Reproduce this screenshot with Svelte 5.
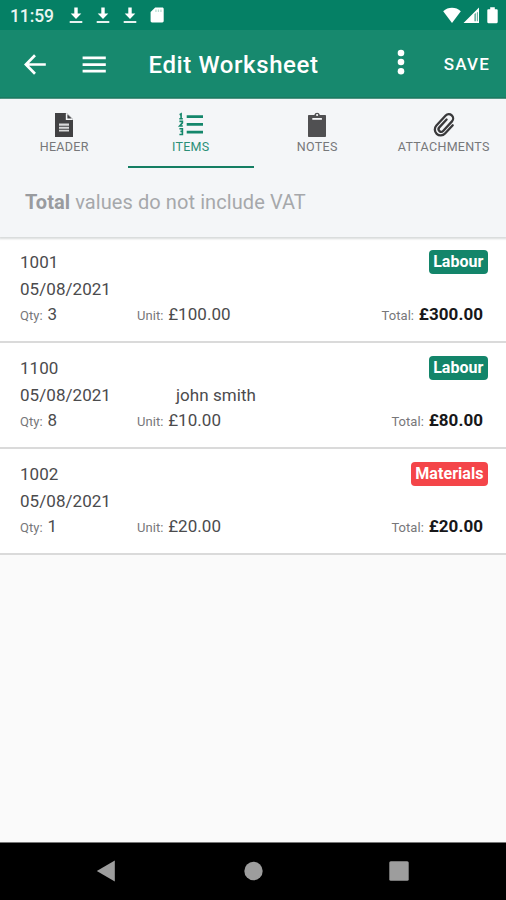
<script>
  const tabs = [
    { id: 'header', label: 'HEADER' },
    { id: 'items', label: 'ITEMS' },
    { id: 'notes', label: 'NOTES' },
    { id: 'attachments', label: 'ATTACHMENTS' }
  ];
  let active = $state('items');

  const rows = [
    { code: '1001', date: '05/08/2021', who: '', qty: '3', unit: '£100.00', total: '£300.00', kind: 'Labour' },
    { code: '1100', date: '05/08/2021', who: 'john smith', qty: '8', unit: '£10.00', total: '£80.00', kind: 'Labour' },
    { code: '1002', date: '05/08/2021', who: '', qty: '1', unit: '£20.00', total: '£20.00', kind: 'Materials' }
  ];
</script>

<div class="screen">
  <div class="status">
    <span class="clock">11:59</span>
    {#each [0, 1, 2] as n (n)}
      <svg class="download" width="14" height="18" viewBox="0 0 14 18" fill="#fff">
        <path d="M5.3 1.500h3.4v6h3.6L7 13.100 1.700 7.500h3.600z" /><path d="M.7 15.100h12.600v1.800H.7z" />
      </svg>
    {/each}
    <svg class="card" width="14" height="16" viewBox="0 0 14 16">
      <path fill="#fff" d="M5.2.5h7.1c.8 0 1.4.6 1.4 1.4v12.2c0 .8-.6 1.4-1.4 1.4H2c-.8 0-1.4-.6-1.4-1.4V5z" />
      <path fill="#b9dcd1" d="M5.3 2.5h1.3v2.4H5.3zM7.8 2.5h1.3v2.4H7.8zM10.3 2.5h1.3v2.4h-1.3z" />
    </svg>
    <span class="grow"></span>
    <svg width="18" height="17" viewBox="0 0 18 17" fill="#fff"><path d="M9 16 .2 4.2C5-.3 13-.3 17.8 4.2z" /></svg>
    <svg class="signal" width="17" height="17" viewBox="0 0 17 17">
      <path fill="#fff" fill-rule="evenodd" d="M.5 16 16 .5V16zM11.600 7v7.300h1V6zM13.900 5.500v8.800h.7V5z" />
    </svg>
    <svg class="battery" width="11" height="17" viewBox="0 0 11 17" fill="#fff"><path d="M3.2.3h4.6v1.9h1.8c.6 0 1.1.5 1.1 1.1v11.8c0 .7-.5 1.2-1.1 1.2H1.4c-.6 0-1.1-.5-1.1-1.2V3.300c0-.6.5-1.1 1.1-1.1h1.8z" /></svg>
  </div>

  <header class="bar">
    <svg class="back" width="24" height="24" viewBox="0 0 24 24" fill="none" stroke="#fff" stroke-width="2.700">
      <path d="M13 2.200 3.900 11.500l9.100 9.300M4 11.500h19.800" />
    </svg>
    <svg class="menu" width="24" height="18" viewBox="0 0 24 18" fill="#fff">
      <path d="M.6 .6h23.200v2.700H.6zM.6 7.200h23.200v2.700H.6zM.6 13.800h23.200v2.700H.6z" />
    </svg>
    <h1>Edit Worksheet</h1>
    <svg class="more" width="8" height="26" viewBox="0 0 8 26" fill="#fff">
      <circle cx="4" cy="4" r="3.300" /><circle cx="4" cy="13" r="3.300" /><circle cx="4" cy="22.200" r="3.300" />
    </svg>
    <button class="save">SAVE</button>
  </header>

  <section class="panel">
    <nav>
      {#each tabs as tab (tab.id)}
        <button class="tab" class:active={active === tab.id} onclick={() => (active = tab.id)}>
          <svg width="28" height="28" viewBox="0 0 28 28">
            {#if tab.id === 'header'}
              <path fill="#414143" d="M5 2h11.700L23 8.300V26H5z" />
              <path fill="#f4f6f8" d="M15.800 2.500v6.600h6.700l.5-.8L16.700 2z" />
              <path fill="#414143" d="M17.400 3.200v4.400h4.400z" />
              <path fill="#d8d9da" d="M9 12.500h10v2.200H9zM9 15.700h10v2H9zM9 18.700h10v1.800H9z" />
            {:else if tab.id === 'items'}
              <path fill="#14876b" d="M9.700 4.300H26V7H9.700zM9.700 12H26v2.700H9.700zM9.700 19.700H26v2.700H9.700z" />
              <path fill="none" stroke="#14876b" stroke-width="1.600" d="M2.600 3.700l1.500-.8v4.700M2.300 7.800h3.500M2.400 10.400h3v1.500L2.700 15h3.100M2.400 17.800h3v2.600H3.400 5.400v3.100h-3" />
            {:else if tab.id === 'notes'}
              <path fill="#505052" d="M6 4h5.300a2.900 2.900 0 0 1 5.600 0H22c.6 0 1 .4 1 1v20c0 .6-.4 1-1 1H6c-.6 0-1-.4-1-1V5c0-.6.4-1 1-1z" />
              <path fill="#f4f6f8" d="M9.300 7h9.600v1.800H9.300z" /><circle cx="14.100" cy="4" r="1.100" fill="#f4f6f8" />
            {:else}
              <path transform="translate(14.600 14.200) rotate(43) translate(-14 -14)" fill="none" stroke="#39393b" stroke-width="2.300" stroke-linecap="round"
                d="M20 8.500v11.300a5.900 5.900 0 0 1-11.800 0V6.200a4.300 4.300 0 0 1 8.600 0v13a2.600 2.600 0 0 1-5.200 0V8.500" />
            {/if}
          </svg>
          <span>{tab.label}</span>
        </button>
      {/each}
    </nav>
    <p class="notice"><b>Total</b> values do not include VAT</p>
  </section>

  <main>
    {#each rows as row (row.code)}
      <article>
        <div class="line">
          <span>{row.code}</span>
          <span class="badge" class:red={row.kind === 'Materials'}>{row.kind}</span>
        </div>
        <div class="line"><span class="date">{row.date}</span><span class="who">{row.who}</span></div>
        <div class="line sums">
          <span class="qty"><small>Qty:</small> {row.qty}</span>
          <span class="unit"><small>Unit:</small> {row.unit}</span>
          <span class="total"><small>Total:</small> <b>{row.total}</b></span>
        </div>
      </article>
    {/each}
  </main>

  <footer>
    <svg width="20" height="22" viewBox="0 0 20 22" fill="#9d9d9d"><path d="M.8 11 18.800.5v21z" /></svg>
    <svg width="20" height="20" viewBox="0 0 20 20" fill="#9d9d9d"><circle cx="10.500" cy="10" r="9.200" /></svg>
    <svg width="20" height="20" viewBox="0 0 20 20" fill="#9d9d9d"><rect x=".3" y=".3" width="19.400" height="19.400" rx="1.500" /></svg>
  </footer>
</div>

<style>
  .screen {
    width: 506px;
    height: 900px;
    display: flex;
    flex-direction: column;
    overflow: hidden;
    background: #fafafa;
    color: #4b4b4d;
    font-family: Roboto, sans-serif;
    font-size: 17px;
    letter-spacing: .05px;
  }
  svg { display: block; flex: none; }
  button { background: none; border: 0; padding: 0; font: inherit; color: inherit; }
  .status {
    height: 30px;
    box-sizing: border-box;
    flex: none;
    display: flex;
    align-items: center;
    padding: 0 8px 0 10px;
    background: #058065;
    color: #e9f5f1;
  }
  .clock { width: 59px; font-size: 17.500px; font-weight: 500; letter-spacing: -.1px; padding-top: 2px; }
  .download { margin-right: 13.100px; }
  .grow { flex: 1; }
  .signal { margin-left: 2px; }
  .battery { margin-left: 7px; }
  .bar {
    height: 69px;
    box-sizing: border-box;
    flex: none;
    display: flex;
    align-items: center;
    padding: 0 16px 0 22px;
    background: #17896e;
    border-bottom: 2px solid #0c7459;
    color: #fff;
  }
  .back { margin-top: 2px; }
  .menu { margin: 2px 42.500px 0 36px; }
  h1 { margin: 2px 0 0; flex: 1; font-size: 24px; font-weight: 500; letter-spacing: .6px; white-space: nowrap; }
  .more { margin: -3px 38.500px 0 0; }
  .save { margin-top: 1px; font-size: 17px; font-weight: 500; letter-spacing: 1.200px; }
  .panel {
    position: relative;
    height: 138px;
    flex: none;
    background: #f4f6f8;
    box-shadow: 0 1px 2px 1px #d8dbdb;
  }
  nav { display: flex; height: 69px; padding-left: 1px; }
  .tab {
    width: 126.500px;
    flex: none;
    box-sizing: border-box;
    padding-top: 12px;
    display: flex;
    flex-direction: column;
    align-items: center;
    border-bottom: 2px solid transparent;
    color: #77787a;
    font-size: 12.500px;
    letter-spacing: .3px;
    line-height: 16px;
  }
  .tab span { white-space: nowrap; }
  .tab.active { color: #2b8f77; border-color: #147e63; }
  .notice { margin: 0; padding: 20px 25px 0; font-size: 20px; line-height: 28px; letter-spacing: .08px; color: #a6a8ab; }
  .notice b { color: #999b9f; }
  article {
    height: 106px;
    box-sizing: border-box;
    padding: 12px 18px 0 20px;
    background: #fff;
    border-bottom: 2px solid #dadada;
  }
  .line { display: flex; height: 26.500px; line-height: 26.500px; white-space: nowrap; }
  .sums { line-height: 25px; }
  .date { width: 156px; }
  .badge {
    margin: 1px 0 0 auto;
    height: 24px;
    box-sizing: border-box;
    padding: 0 4.500px;
    border-radius: 4px;
    background: #13856a;
    color: #fff;
    font-size: 16px;
    font-weight: 700;
    line-height: 24px;
  }
  .badge.red { background: #f44549; }
  small { font-size: 13px; color: #77777a; margin-right: .5px; }
  .qty { width: 117px; }
  .total { margin-left: auto; padding-right: 5px; }
  .total b { color: #171719; font-weight: 700; }
  footer {
    height: 58px;
    box-sizing: border-box;
    margin-top: auto;
    flex: none;
    display: flex;
    justify-content: space-between;
    align-items: center;
    padding: 0 97px 2px 96px;
    background: #000;
    border-top: 1px solid #777;
  }
</style>
